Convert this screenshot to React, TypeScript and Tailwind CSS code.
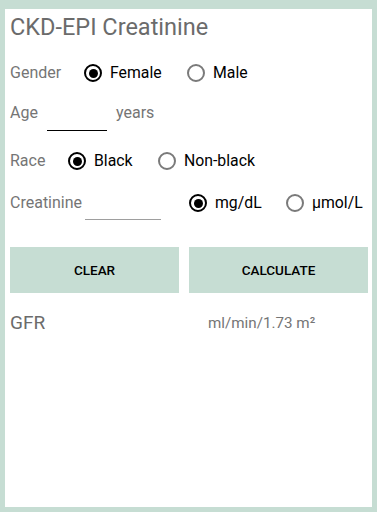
function Radio({ checked }: { checked?: boolean }) {
  return (
    <span
      className={`flex h-[18px] w-[18px] shrink-0 items-center justify-center rounded-full border-2 ${
        checked ? 'border-black' : 'border-[#7a7a7a]'
      }`}
    >
      {checked && <span className="h-[9px] w-[9px] rounded-full bg-black" />}
    </span>
  );
}

function Option({ label, checked, className = '' }: { label: string; checked?: boolean; className?: string }) {
  return (
    <label className={`flex items-center gap-2 ${className}`}>
      <Radio checked={checked} />
      <span className="text-[15.8px] text-black">{label}</span>
    </label>
  );
}

export default function App() {
  return (
    <div
      className="h-[512px] w-[377px] bg-[#c6ddd3] pt-[9px] pr-[5px] pb-[5px] pl-[5px]"
      style={{ fontFamily: 'Roboto, "Liberation Sans", sans-serif' }}
    >
      <div className="flex h-full flex-col bg-white pt-[3px] pl-[5px] pr-[4px]">
        <h1 className="h-[30px] text-[23.5px] leading-[30px] text-[#6b6b6b]">CKD-EPI Creatinine</h1>

        <div className="mt-[15px] flex h-[32px] items-center">
          <span className="w-[74px] text-[16px] text-[#757575]">Gender</span>
          <Option label="Female" checked className="w-[103px]" />
          <Option label="Male" />
        </div>

        <div className="mt-[8px] flex items-start">
          <span className="w-[37px] text-[16px] leading-[32px] text-[#757575]">Age</span>
          <div className="h-[34px] w-[60px] border-b border-black" />
          <span className="ml-[9px] text-[16px] leading-[32px] text-[#757575]">years</span>
        </div>

        <div className="mt-[14px] flex h-[32px] items-center">
          <span className="w-[58px] text-[16px] text-[#757575]">Race</span>
          <Option label="Black" checked className="w-[90px]" />
          <Option label="Non-black" />
        </div>

        <div className="mt-[10px] flex items-start">
          <span className="w-[75px] text-[16px] leading-[32px] text-[#757575]">Creatinine</span>
          <div className="h-[33px] w-[76px] border-b border-[#9e9e9e]" />
          <div className="ml-[28px] flex h-[32px] items-center">
            <Option label="mg/dL" checked className="w-[97px]" />
            <Option label="µmol/L" />
          </div>
        </div>

        <div className="mt-[27px] flex h-[46px] gap-[10px]">
          <button className="w-[169px] bg-[#c6ddd3] text-[13.5px] font-medium text-black">CLEAR</button>
          <button className="flex-1 bg-[#c6ddd3] text-[13.5px] font-medium text-black">CALCULATE</button>
        </div>

        <div className="mt-[14px] flex h-[32px] items-center">
          <span className="w-[198px] text-[19px] text-[#6b6b6b]">GFR</span>
          <span className="text-[15.2px] text-[#757575]">ml/min/1.73 m²</span>
        </div>
      </div>
    </div>
  );
}
